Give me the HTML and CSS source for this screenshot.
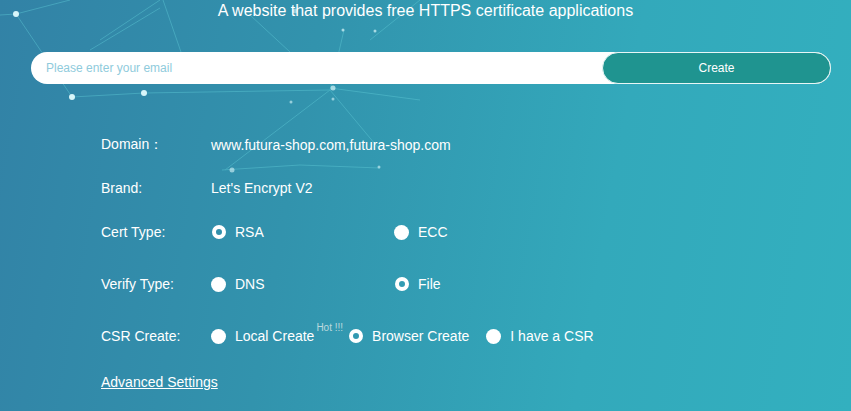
FILE: index.html
```html
<!DOCTYPE html>
<html>
<head>
<meta charset="utf-8">
<link rel="stylesheet" href="styles.css">
</head>
<body>
<div class="page">
  <svg class="net" width="851" height="411" viewBox="0 0 851 411">
    <g stroke="#5ec9d6" stroke-width="1" fill="none" opacity="0.45">
      <line x1="0" y1="15" x2="16" y2="14"/>
      <line x1="16" y1="14" x2="70" y2="0"/>
      <line x1="16" y1="14" x2="72" y2="97"/>
      <line x1="72" y1="97" x2="144" y2="93"/>
      <line x1="144" y1="93" x2="330" y2="90"/>
      <line x1="163" y1="0" x2="182" y2="55"/>
      <line x1="90" y1="50" x2="160" y2="8"/>
      <line x1="100" y1="40" x2="160" y2="0"/>
      <line x1="250" y1="15" x2="290" y2="52"/>
      <line x1="330" y1="90" x2="380" y2="150"/>
      <line x1="330" y1="90" x2="344" y2="30"/>
      <line x1="225" y1="170" x2="330" y2="90"/>
      <line x1="222" y1="170" x2="300" y2="165"/>
      <line x1="300" y1="165" x2="380" y2="168"/>
      <line x1="370" y1="40" x2="420" y2="0"/>
      <line x1="330" y1="88" x2="420" y2="100"/>
    </g>
    <g fill="#d8f6fa">
      <circle cx="16" cy="14" r="3"/>
      <circle cx="72" cy="97" r="3"/>
      <circle cx="144" cy="93" r="3"/>
      <circle cx="333" cy="88" r="2.5" opacity="0.7"/>
      <circle cx="343" cy="30" r="1.5" opacity="0.7"/>
      <circle cx="375" cy="31" r="1.5" opacity="0.7"/>
      <circle cx="291" cy="102" r="1.5" opacity="0.6"/>
      <circle cx="333" cy="99" r="1.5" opacity="0.6"/>
      <circle cx="232" cy="170" r="2.5" opacity="0.6"/>
      <circle cx="379" cy="167" r="1.5" opacity="0.6"/>
      <circle cx="295" cy="11" r="2.5" opacity="0.6"/>
    </g>
  </svg>

  <h1 class="title">A website that provides free HTTPS certificate applications</h1>

  <div class="bar">
    <input class="email" type="text" placeholder="Please enter your email">
    <button class="create">Create</button>
  </div>

  <div class="form">
    <div class="row r-domain">
      <span class="label">Domain：</span>
      <span class="value">www.futura-shop.com,futura-shop.com</span>
    </div>
    <div class="row r-brand">
      <span class="label">Brand:</span>
      <span class="value">Let's Encrypt V2</span>
    </div>
    <div class="row r-cert">
      <span class="label">Cert Type:</span>
      <span class="opt wide"><span class="radio on"></span>RSA</span>
      <span class="opt wide"><span class="radio"></span>ECC</span>
    </div>
    <div class="row r-verify">
      <span class="label">Verify Type:</span>
      <span class="opt wide"><span class="radio"></span>DNS</span>
      <span class="opt wide"><span class="radio on"></span>File</span>
    </div>
    <div class="row r-csr">
      <span class="label">CSR Create:</span>
      <span class="opt"><span class="radio"></span>Local Create<sup class="hot">Hot !!!</sup></span>
      <span class="opt o-browser"><span class="radio on"></span>Browser Create</span>
      <span class="opt o-csr"><span class="radio"></span>I have a CSR</span>
    </div>
    <div class="row r-adv">
      <a class="adv" href="#">Advanced Settings</a>
    </div>
  </div>
</div>
</body>
</html>
```

FILE: styles.css
```css
html, body {
  margin: 0;
  padding: 0;
}
body {
  width: 851px;
  height: 411px;
  overflow: hidden;
  font-family: "Liberation Sans", Arial, sans-serif;
  color: #ffffff;
}
.page {
  position: relative;
  width: 851px;
  height: 411px;
  background: linear-gradient(100deg, #3282a6 0%, #3293ad 35%, #33a9bb 70%, #33b0bf 100%);
  overflow: hidden;
}
.net {
  position: absolute;
  left: 0;
  top: 0;
  pointer-events: none;
}
.title {
  position: relative;
  margin: 0;
  padding-top: 1px;
  height: 52px;
  box-sizing: border-box;
  font-size: 16px;
  font-weight: normal;
  line-height: 20px;
  text-align: center;
  color: #ffffff;
}
.bar {
  position: relative;
  display: flex;
  margin-left: 31px;
  width: 800px;
  height: 32px;
  background: #ffffff;
  border-radius: 16px;
}
.email {
  flex: 1;
  border: none;
  outline: none;
  background: transparent;
  padding: 0 0 0 15px;
  font-family: "Liberation Sans", Arial, sans-serif;
  font-size: 12px;
  color: #333;
}
.email::placeholder {
  color: #8fcbdc;
}
.create {
  width: 229px;
  height: 32px;
  box-sizing: border-box;
  border: 1px solid #e8f6f6;
  border-radius: 16px;
  background: #1f9490;
  color: #ffffff;
  font-family: "Liberation Sans", Arial, sans-serif;
  font-size: 12px;
  padding: 0;
}
.form {
  position: relative;
  padding-left: 101px;
  padding-top: 51px;
}
.row {
  display: flex;
  align-items: center;
  height: 20px;
  font-size: 14px;
}
.r-brand { margin-top: 23px; }
.r-cert { margin-top: 24px; }
.r-verify { margin-top: 32px; }
.r-csr { margin-top: 32px; }
.r-adv { margin-top: 26px; }
.label {
  width: 110px;
  flex: none;
}
.value {
  white-space: nowrap;
}
.opt {
  display: flex;
  align-items: center;
  white-space: nowrap;
}
.opt.wide {
  width: 183px;
}
.radio {
  width: 15px;
  height: 15px;
  box-sizing: border-box;
  border-radius: 50%;
  background: #ffffff;
  margin-right: 9px;
  margin-left: 0;
  flex: none;
}
.radio.on {
  width: 14px;
  height: 14px;
  margin-left: 1px;
  background: transparent;
  border: 4px solid #ffffff;
}
.hot {
  font-size: 10px;
  color: #bcd9de;
  align-self: flex-start;
  margin-top: -6px;
  margin-left: 2px;
  vertical-align: super;
}
.o-browser {
  margin-left: 5px;
}
.o-csr {
  margin-left: 17px;
}
.adv {
  color: #ffffff;
  text-decoration: underline;
  font-size: 14px;
}
```
